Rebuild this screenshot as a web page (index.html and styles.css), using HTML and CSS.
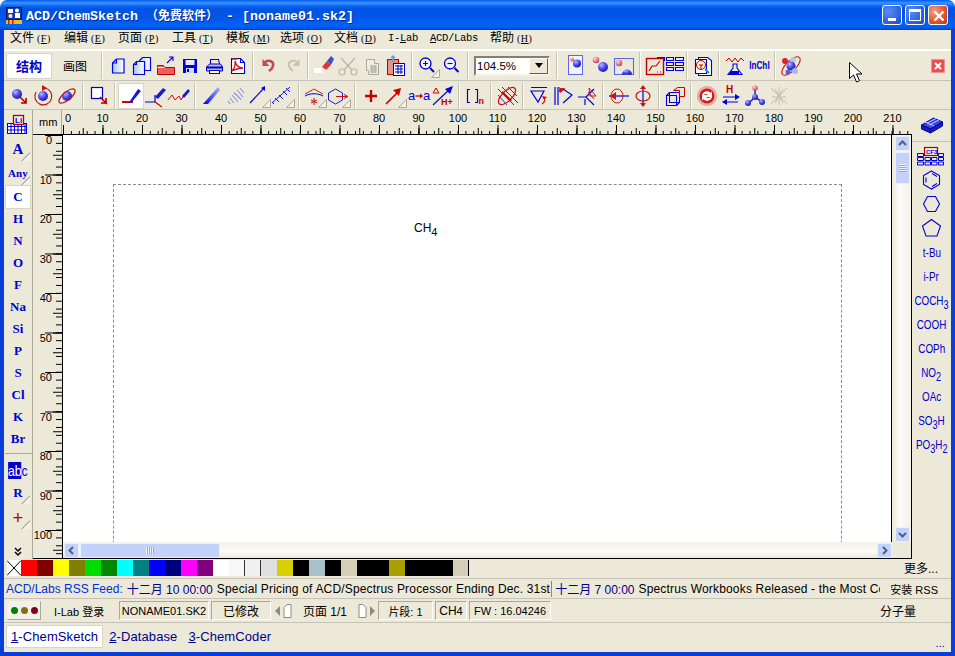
FILE: index.html
```html
<!DOCTYPE html>
<html lang="zh">
<head>
<meta charset="utf-8">
<title>ACD/ChemSketch</title>
<link rel="stylesheet" href="styles.css">
</head>
<body>
<svg class="defs"><defs>
<radialGradient id="bb" cx=".35" cy=".3" r=".8"><stop offset="0" stop-color="#b8b8ff"/><stop offset=".5" stop-color="#4848e8"/><stop offset="1" stop-color="#1010a0"/></radialGradient>
<radialGradient id="pb" cx=".35" cy=".3" r=".8"><stop offset="0" stop-color="#ffd8d8"/><stop offset=".6" stop-color="#e07080"/><stop offset="1" stop-color="#a03040"/></radialGradient>
<radialGradient id="rc" cx=".5" cy=".5" r=".6"><stop offset="0" stop-color="#f4e0d8"/><stop offset=".7" stop-color="#e8b0a8"/><stop offset="1" stop-color="#d08078"/></radialGradient>
<linearGradient id="wedge" x1="0" y1="1" x2="1" y2="0"><stop offset="0" stop-color="#0000e0"/><stop offset="1" stop-color="#a8b8f8"/></linearGradient>
<linearGradient id="pg" x1="0" y1="0" x2="1" y2="0"><stop offset="0" stop-color="#a8c8f0"/><stop offset="1" stop-color="#fff"/></linearGradient>
</defs></svg>
<div class="titlebar">
  <svg class="appicon" viewBox="0 0 16 17"><rect width="16" height="13" fill="#101858"/><rect x="1" y="1" width="14" height="11" fill="#2038a0"/><path d="M2 2h5v4H2zM9 6h5v5H9z" fill="#fff"/><circle cx="11" cy="3.500" r="2" fill="#fff"/><circle cx="4.500" cy="9" r="2" fill="#e8e8ff"/><rect y="13" width="16" height="4" fill="#e8c020"/><path d="M2 17v-4h1.500v4zM6 17v-4h1.500v4z" fill="#d02010"/></svg>
  <span class="title">ACD/ChemSketch <span class="cjk">（免费软件）</span> - [noname01.sk2]</span>
  <div class="wbtns">
    <span class="wbtn"><i class="g-min"></i></span>
    <span class="wbtn"><i class="g-max"></i></span>
    <span class="wbtn close"><svg viewBox="0 0 18 18" width="18" height="18"><path d="M4.500 4.500l9 9M13.500 4.500l-9 9" stroke="#fff" stroke-width="2.400" fill="none"/></svg></span>
  </div>
</div>
<div class="client">
  <nav class="menu">
    <span class="mi">文件<b>(<u>F</u>)</b></span><span class="mi">编辑<b>(<u>E</u>)</b></span><span class="mi">页面<b>(<u>P</u>)</b></span><span class="mi">工具<b>(<u>T</u>)</b></span><span class="mi">模板<b>(<u>M</u>)</b></span><span class="mi">选项<b>(<u>O</u>)</b></span><span class="mi">文档<b>(<u>D</u>)</b></span><span class="mi m1">I-<u>L</u>ab</span><span class="mi m2"><u>A</u>CD/Labs</span><span class="mi">帮助<b>(<u>H</u>)</b></span>
  </nav>

  <div class="tb tb1">
    <span class="modetab on">结构</span><span class="modetab">画图</span>
    <i class="sep"></i>
    <svg class="ic" viewBox="0 0 24 24"><path class="pg" d="M6.500 9l4-4h7.500v14H6.500z"/><path class="bl" d="M6.500 9h4V5"/></svg>
    <svg class="ic" viewBox="0 0 24 24"><path class="pg" d="M9.500 6.500l3-3h8v13h-11z"/><path class="pg" d="M3.500 10.500l3-3h8v13h-11z"/><path class="bl" d="M3.500 10.500h3v-3"/></svg>
    <svg class="ic" viewBox="0 0 24 24"><path d="M3.500 11.500h6l1 2h10v7h-17z" fill="#e86060" stroke="#c00000"/><path d="M3.500 13.500h7" stroke="#fff"/><path class="bl" d="M13 9l6-6M15 3h4v4"/></svg>
    <svg class="ic" viewBox="0 0 24 24"><rect x="5" y="5" width="14" height="14" fill="#0000d8"/><rect x="7.500" y="6" width="9" height="5" fill="#e8e8ff"/><rect x="8" y="14" width="8" height="5" fill="#d0d8f0"/><rect x="9" y="15" width="2" height="3" fill="#0000d8"/></svg>
    <svg class="ic" viewBox="0 0 24 24"><path class="bl" d="M8.500 10V5.500h8l1 4.500"/><path d="M4.500 13l3-3h11l2 3v4h-16z" fill="#b8c0e0" stroke="#0000c0"/><path d="M4.500 13.500h16" stroke="#0000c0" stroke-width="2"/><rect x="7.500" y="16.500" width="10" height="3" fill="#fff" stroke="#0000c0"/></svg>
    <svg class="ic" viewBox="0 0 24 24"><path class="wp" d="M5.500 4.500h9l4 4v11h-13z"/><path class="bl" d="M14.500 4.500v4h4"/><path d="M6 5h5M5.500 17c3-2 4-6 3.500-10 1 4 3 7 8 7-4 0-7 1-11.500 3z" fill="none" stroke="#d81010" stroke-width="1.300"/></svg>
    <i class="sep n"></i>
    <svg class="ic" viewBox="0 0 24 24"><path d="M8 8c5-3 9 0 8 4-.500 3-3 4-4 5" fill="none" stroke="#c84858" stroke-width="2.600"/><path d="M5.500 5v7h7z" fill="#c84858"/></svg>
    <svg class="ic" viewBox="0 0 24 24"><path d="M16 8c-5-3-9 0-8 4 .500 3 3 4 4 5" fill="none" stroke="#c4c4bc" stroke-width="2"/><path d="M18.500 5v7h-7z" fill="#c4c4bc"/></svg>
    <i class="sep n"></i>
    <svg class="ic" viewBox="0 0 24 24"><rect x="2" y="14" width="9" height="5" fill="#fff"/><path d="M10 13l5-6 4 4-5 5z" fill="#d83830"/><path d="M15 7l4-5 3 3-3 6z" fill="#3850d0"/><path d="M10 13l4 3-2 2-3-2z" fill="#f0e8e0"/></svg>
    <svg class="ic" viewBox="0 0 24 24"><path d="M5 4l11 12M19 4L8 16" stroke="#b8b8b0" stroke-width="1.400" fill="none"/><circle cx="6" cy="18" r="3" fill="none" stroke="#b8b8b0" stroke-width="1.200"/><circle cx="18" cy="18" r="3" fill="none" stroke="#b8b8b0" stroke-width="1.200"/></svg>
    <svg class="ic" viewBox="0 0 24 24"><path d="M6.500 5.500h8v4h4v11h-10v-4h-2z" fill="#f0eee4" stroke="#a8a8a0"/><path d="M10 12h7M10 14h7M10 16h7M10 18h7M12 11v8M15 11v8" stroke="#a8a8a0"/></svg>
    <svg class="ic" viewBox="0 0 24 24"><rect x="3.500" y="5.500" width="11" height="15" fill="#e89090" stroke="#c00000"/><rect x="9.500" y="9.500" width="11" height="12" fill="#fff" stroke="#0000c0"/><path d="M11 12h8M11 15h8M11 18h8M14 11v9M17 11v9" stroke="#0000c0"/><path d="M9 1l3 3h-2v4H8V4H6z" fill="#60a0e8"/></svg>
    <i class="sep"></i>
    <svg class="ic" viewBox="0 0 24 24"><circle cx="9.500" cy="9.500" r="5.500" fill="#f0f4ff" stroke="#0000d0" stroke-width="1.300"/><path class="bl" d="M7 9.500h5M9.500 7v5"/><path d="M14 14l4 4" stroke="#0000d0" stroke-width="2"/><path class="tri" d="M23.500 15.500v8h-8z"/></svg>
    <svg class="ic" viewBox="0 0 24 24"><circle cx="10" cy="9.500" r="5.500" fill="#f0f4ff" stroke="#0000d0" stroke-width="1.300"/><path class="bl" d="M7.500 9.500h5"/><path d="M14.500 14l4 4" stroke="#0000d0" stroke-width="2"/></svg>
    <i class="sep"></i>
    <div class="combo"><span class="cval">104.5%</span><span class="cbtn"><i></i></span></div>
    <i class="sep s2"></i>
    <svg class="ic" viewBox="0 0 24 24"><rect x="4.500" y="1.500" width="14" height="19" fill="#f4f2f8" stroke="#5868e8"/><circle cx="8" cy="5.500" r="2" fill="url(#pb)"/><circle cx="13" cy="9.500" r="4" fill="url(#bb)"/></svg>
    <svg class="ic" viewBox="0 0 24 24"><circle cx="8" cy="6" r="3.300" fill="url(#pb)"/><circle cx="15" cy="13" r="5" fill="url(#bb)"/></svg>
    <svg class="ic" viewBox="0 0 24 24"><path class="bl bl3" d="M2.500 20.500V4.500h19v16z"/><circle cx="7" cy="9" r="3.300" fill="url(#pb)"/><path d="M10 20.500a5 5 0 0 1 10 0z" fill="url(#bb)"/></svg>
    <i class="sep"></i>
    <svg class="ic wide" viewBox="0 0 40 24"><path d="M13.500 3.500h7v3h-7zM22.500 3.500h7v3h-7zM31.500 3.500h8v3h-8zM22.500 8.500h7v3h-7zM31.500 8.500h8v3h-8zM22.500 13.500h7v3h-7zM31.500 13.500h8v3h-8z" fill="none" stroke="#0000e0" stroke-width="1.100"/><rect x="2.500" y="4.500" width="17" height="16" fill="#ece9d8" stroke="#c00000" stroke-width="1.400"/><path d="M5 17l3-5h4l4-5M13 18h1M16 18h1" fill="none" stroke="#c00000" stroke-width="1.200"/></svg>
    <i class="sep n"></i>
    <svg class="ic" viewBox="0 0 24 24"><path class="wp" d="M7.500 3.500h9l4 3v15h-13z"/><path class="wp" d="M4.500 5.500h11v14h-11z"/><circle cx="10" cy="11" r="4.500" fill="#f4f0d0" stroke="#c00000"/><path d="M8 11h4M10 11v4" stroke="#c00000"/><path d="M14 15l4 4" stroke="#00a0c0" stroke-width="2"/></svg>
    <i class="sep"></i>
    <svg class="ic" viewBox="0 0 24 24"><path d="M3 7l3-3 3 4 3-4 3 4 3-4 3 3" fill="none" stroke="#c00000"/><path class="bl" d="M10 10h4v4l5 6.500H5l5-6.500z"/><path d="M8 17h8v3H6z" fill="#0000d8"/></svg>
    <span class="inchi">InChI</span>
    <i class="sep"></i>
    <svg class="ic" viewBox="0 0 24 24"><ellipse cx="12" cy="12" rx="12" ry="5" transform="rotate(-45 12 12)" fill="none" stroke="#d01010"/><circle cx="6" cy="7" r="3" fill="#e02030"/><circle cx="14" cy="6" r="3" fill="#b8c8e8"/><circle cx="12" cy="12" r="4.500" fill="url(#bb)"/><circle cx="16" cy="17" r="3" fill="#a8b8e8"/><circle cx="9" cy="18" r="2.500" fill="#5060e0"/></svg>
    <span class="grow"></span>
    <span class="closex"><svg viewBox="0 0 14 14" width="14" height="14"><path d="M4 4l6 6M10 4l-6 6" stroke="#fff" stroke-width="2" fill="none"/></svg></span>
  </div>

  <div class="tb tb2">
    <svg class="ic" viewBox="0 0 24 24"><circle cx="10" cy="10" r="5" fill="url(#bb)"/><path d="M13 13l6 6M19 14v5h-5" stroke="#b00000" stroke-width="1.600" fill="none"/></svg>
    <svg class="ic" viewBox="0 0 24 24"><circle cx="12" cy="12" r="5" fill="url(#bb)"/><path d="M5 8a8.500 8.500 0 1 0 9-4" fill="none" stroke="#d01010" stroke-width="1.200"/><path d="M11 1l5 3-5 3z" fill="#d01010"/></svg>
    <svg class="ic" viewBox="0 0 24 24"><circle cx="12" cy="12" r="5" fill="url(#bb)"/><ellipse cx="12" cy="12" rx="10" ry="4" transform="rotate(-40 12 12)" fill="none" stroke="#c01010" stroke-width="1.200"/></svg>
    <i class="sep"></i>
    <svg class="ic" viewBox="0 0 24 24"><rect x="4.500" y="3.500" width="11" height="11" fill="#fff" stroke="#0000d0" stroke-width="1.200"/><path d="M13 13l7 7M19 14v5h-5" stroke="#b00000" stroke-width="1.600" fill="none"/></svg>
    <i class="sep"></i>
    <span class="sel"><svg class="ic" viewBox="0 0 24 24"><path d="M3 18h11" stroke="#d00000" stroke-width="2"/><path d="M11 17l8-12 3 2-9 11-3 1z" fill="#1818d8"/></svg></span>
    <svg class="ic" viewBox="0 0 24 24"><path d="M2 18h10M12 18V11" stroke="#0000e0" stroke-width="1.200" fill="none"/><path d="M12 18l7 5" stroke="#d00000" stroke-width="1.200"/><path d="M12 13l8-9 3 2-8 9z" fill="#1818d8"/></svg>
    <svg class="ic" viewBox="0 0 24 24"><path d="M1 16l4-5 3 5 4-4 2 4 3-5" stroke="#d01010" fill="none"/><path d="M15 12l6-7 2 2-6 7z" fill="#1818d8"/></svg>
    <i class="sep"></i>
    <svg class="ic" viewBox="0 0 24 24"><path d="M4 20L19 3l2 3-12 14z" fill="url(#wedge)"/></svg>
    <svg class="ic" viewBox="0 0 24 24"><path d="M5 17l2 3M7 14l4 5M9 11l6 7M11 8.500l7 7M14 6l6 7M17 4l4 5" stroke="#8098e8" stroke-width="1.100" fill="none"/></svg>
    <svg class="ic" viewBox="0 0 24 24"><path class="bl" d="M3 19L17 4"/><path d="M18 2v5l-4-3z" fill="#0000e0"/><path class="tri" d="M23.500 15.500v8h-8z"/></svg>
    <svg class="ic" viewBox="0 0 24 24"><path class="thin" d="M1 19L19 3M4 14l4 4M8 11l4 4M12 7l4 4M3 20l-2-2M15 4l4 4"/><path class="tri" d="M23.500 15.500v8h-8z"/></svg>
    <i class="sep"></i>
    <svg class="ic" viewBox="0 0 24 24"><path d="M2 10l9-5 9 5" stroke="#d02020" fill="none"/><path d="M2 12c5-3 13-3 18 0" stroke="#0000d0" fill="none"/><path d="M11 14v7M8 16l6 3M14 16l-6 3" stroke="#d00000"/><path class="tri" d="M23.500 15.500v8h-8z"/></svg>
    <svg class="ic" viewBox="0 0 24 24"><path class="thin" d="M8.500 5l7 4v7l-7 4-7-4V9z"/><path d="M9 12.500h11M17 10.500l4 2-4 2" stroke="#d01010" fill="none"/><path class="tri" d="M23.500 15.500v8h-8z"/></svg>
    <i class="sep"></i>
    <svg class="ic" viewBox="0 0 24 24"><path d="M6 12h12M12 6v12" stroke="#c80000" stroke-width="2.400"/></svg>
    <svg class="ic" viewBox="0 0 24 24"><path d="M3 20L15 8" stroke="#c80000" stroke-width="1.700"/><path d="M18 4l-2 8-6-6z" fill="#c80000"/><path class="tri" d="M23.500 15.500v8h-8z"/></svg>
    <svg class="ic" viewBox="0 0 24 24"><text class="ta" x="1" y="16">a</text><text class="ta" x="16" y="16">a</text><path d="M8.500 12h5" stroke="#d00000" stroke-width="1.300"/><path d="M13 9.500l3 2.500-3 2.500z" fill="#d00000"/></svg>
    <svg class="ic" viewBox="0 0 24 24"><path d="M2 21l18-17" stroke="#0000d0" stroke-width="1.100"/><path d="M22 2l-3 8-5-5z" fill="#0000d8"/><path d="M5 4l3 5H2z" fill="none" stroke="#d00000"/><text class="th" x="10" y="21">H+</text></svg>
    <i class="sep"></i>
    <svg class="ic" viewBox="0 0 24 24"><path d="M7 5.500H4.500v13H7M12 5.500h2.500v13H12" stroke="#0000e0" stroke-width="1.200" fill="none"/><text class="tn" x="15.500" y="20">n</text></svg>
    <i class="sep"></i>
    <svg class="ic" viewBox="0 0 24 24"><path d="M3 5l16 16M7 3l16 16M13 3l9 9M3 11l9 10" stroke="#2030e0" fill="none"/><ellipse cx="12" cy="12" rx="11" ry="5" transform="rotate(-45 12 12)" fill="none" stroke="#d01010" stroke-width="1.200"/><path d="M7 8l9 9" stroke="#c01010" stroke-width="2.400"/></svg>
    <i class="sep"></i>
    <svg class="ic" viewBox="0 0 24 24"><path d="M4 3.500h16M4 7h13l-6 11z" fill="none" stroke="#0000e0" stroke-width="1.200"/><path d="M15 20c3-2 3-5 2-7" stroke="#d01010" fill="none" stroke-width="1.200"/><path d="M15 12l5 1-3 3z" fill="#d01010"/></svg>
    <svg class="ic" viewBox="0 0 24 24"><path d="M4 3v18M7 3v18M12 19l9-8-9-6" stroke="#0000e0" fill="none" stroke-width="1.200"/><path d="M8 8c1-3 3-4 6-3" stroke="#d01010" fill="none" stroke-width="1.200"/><path d="M8 3l1 6 4-3z" fill="#d01010"/></svg>
    <svg class="ic" viewBox="0 0 24 24"><path d="M3 13h8l8 8M11 13l8-8M10 21v-6" stroke="#0000e0" stroke-width="1.200" fill="none"/><path d="M14 4l7 8-6 0zM13 8l6 7" stroke="#d01010" fill="none"/></svg>
    <i class="sep"></i>
    <svg class="ic" viewBox="0 0 24 24"><path d="M2 12h20" stroke="#0000e0" stroke-width="1.200"/><ellipse cx="10" cy="12" rx="6" ry="7" fill="none" stroke="#d01010"/><path d="M3 12l6-4v8z" fill="#d01010"/></svg>
    <svg class="ic" viewBox="0 0 24 24"><path d="M12 4v16" stroke="#3040e8" stroke-width="1.600"/><ellipse cx="12" cy="12" rx="7" ry="5" fill="none" stroke="#d01010" stroke-width="1.200"/><path d="M12 1l3 4H9zM12 23l3-4H9z" fill="#d01010"/></svg>
    <i class="sep"></i>
    <svg class="ic" viewBox="0 0 24 24"><path class="bl" d="M3.500 11.500h10v10h-10zM3.500 11.500l3-3h10v10l-3 3M6.500 8.500v10h10"/><path d="M10.500 6.500l4-3h7v9h-5v-6z" fill="none" stroke="#d00000"/></svg>
    <i class="sep"></i>
    <svg class="ic" viewBox="0 0 24 24"><circle cx="12" cy="12" r="10" fill="url(#rc)"/><circle cx="12" cy="12" r="7.500" fill="#d81818"/><path d="M7 11c1-4 6-5 9-2l1-2v6h-6l2-2c-2-2-4-1-5 1zM17 13c-1 4-6 5-9 2l-1 2v-6h6l-2 2c2 2 4 1 5-1z" fill="#fff"/></svg>
    <svg class="ic" viewBox="0 0 24 24"><text class="th2" x="7" y="9">H</text><path d="M4 13h15M4 18h15" stroke="#0000d8" stroke-width="1.200"/><path d="M21 13l-5-3v6zM3 18l5-3v6z" fill="#0000d8"/></svg>
    <svg class="ic" viewBox="0 0 24 24"><path d="M12 5v8M12 13l-6 6M12 13l7 5" stroke="#2030d0" stroke-width="1.600"/><circle cx="12" cy="4" r="2.800" fill="url(#pb)"/><circle cx="12" cy="13" r="3" fill="url(#bb)"/><circle cx="5" cy="19" r="3" fill="url(#bb)"/><circle cx="19" cy="18" r="3" fill="url(#bb)"/></svg>
    <svg class="ic" viewBox="0 0 24 24"><path d="M4 4l16 16M20 4L4 20M12 3v18M5 13h14M8 5l8 14M16 5L8 19" stroke="#c0beb4" stroke-width="1"/><circle cx="12" cy="12" r="2" fill="#c8c6bc"/></svg>
  </div>

  <div class="work">
    <aside class="lpal">
      <div class="lbtn"><svg class="ic" viewBox="0 0 24 24"><rect x="1.500" y="10.500" width="19" height="10" fill="#fff" stroke="#0000e0"/><path d="M1.500 13.500h19M1.500 17h19M5 10v11M8.500 10v11M12 10v11M15.500 10v11M19 10v11" stroke="#0000e0"/><rect x="7.500" y="2.500" width="10" height="9" fill="#f0eee0" stroke="#b00000" stroke-width="1.300"/><text class="tli" x="9" y="10">Li</text></svg></div>
      <div class="lel tall">A<i class="tri-c"></i></div>
      <div class="lel tall any">Any<i class="tri-c"></i></div>
      <div class="lel sel-c">C</div>
      <div class="lel">H</div>
      <div class="lel">N</div>
      <div class="lel">O</div>
      <div class="lel">F</div>
      <div class="lel">Na</div>
      <div class="lel">Si</div>
      <div class="lel">P</div>
      <div class="lel">S</div>
      <div class="lel">Cl</div>
      <div class="lel">K</div>
      <div class="lel">Br</div>
      <hr class="lsep">
      <div class="labc"><span class="hl">ab</span>c</div>
      <div class="lel">R<i class="tri-c"></i></div>
      <div class="lel plus">+<i class="tri-c"></i></div>
      <span class="grow"></span>
      <svg class="chev" viewBox="0 0 8 10"><path d="M1 1l3 3 3-3M1 5l3 3 3-3" fill="none" stroke="#000" stroke-width="1.500"/></svg>
    </aside>

    <div class="center">
      <div class="rulertop">
        <span class="mm">mm</span>
        <div class="hticks">
          <span class="hn first">0</span><span class="hn">10</span><span class="hn">20</span><span class="hn">30</span><span class="hn">40</span><span class="hn">50</span><span class="hn">60</span><span class="hn">70</span><span class="hn">80</span><span class="hn">90</span><span class="hn">100</span><span class="hn">110</span><span class="hn">120</span><span class="hn">130</span><span class="hn">140</span><span class="hn">150</span><span class="hn">160</span><span class="hn">170</span><span class="hn">180</span><span class="hn">190</span><span class="hn">200</span><span class="hn">210</span>
        </div>
      </div>
      <div class="body">
        <div class="vticks">
          <span class="vn">0</span><span class="vn">10</span><span class="vn">20</span><span class="vn">30</span><span class="vn">40</span><span class="vn">50</span><span class="vn">60</span><span class="vn">70</span><span class="vn">80</span><span class="vn">90</span><span class="vn">100</span>
        </div>
        <div class="viewport">
          <div class="canvas">
            <div class="pagebox"></div>
            <div class="ch4">CH<sub>4</sub></div>
          </div>
          <div class="vscroll">
            <span class="sbtn"><svg viewBox="0 0 15 15" width="15" height="15"><path d="M4 9l3.500-3.500L11 9" stroke="#4d6185" stroke-width="2" fill="none"/></svg></span>
            <span class="vthumb"><i></i></span>
            <span class="grow"></span>
            <span class="sbtn"><svg viewBox="0 0 15 15" width="15" height="15"><path d="M4 6l3.500 3.500L11 6" stroke="#4d6185" stroke-width="2" fill="none"/></svg></span>
          </div>
          <div class="hscroll">
            <span class="sbtn"><svg viewBox="0 0 15 15" width="15" height="15"><path d="M9 4L5.500 7.500 9 11" stroke="#4d6185" stroke-width="2" fill="none"/></svg></span>
            <span class="hthumb"><i></i></span>
            <span class="grow"></span>
            <span class="sbtn"><svg viewBox="0 0 15 15" width="15" height="15"><path d="M6 4l3.500 3.500L6 11" stroke="#4d6185" stroke-width="2" fill="none"/></svg></span>
          </div>
          <div class="corner"></div>
        </div>
      </div>
    </div>

    <aside class="rpal">
      <div class="rtop"><svg class="ic" viewBox="0 0 24 24"><path d="M1.500 12l12-7 9 4-12 7z" fill="#3848e0" stroke="#0000b0"/><path d="M1.500 12v4l9 4v-4zM10.500 16v4l12-7V9z" fill="#1820b0" stroke="#0000b0"/><path d="M7 10l10-5M9 12l10-5M5 9l9 4" stroke="#c8d0ff" fill="none"/></svg></div>
      <div class="ri"><svg class="ic over" viewBox="0 0 24 24"><path d="M-2.500 9.500h6v3h-6zM18.500 9.500h5v3h-5zM-2.500 13.500h6v3h-6zM5 13.500h5.500v3H5zM11.500 13.500h5.500v3h-5.500zM18.500 13.500h5v3h-5zM-2.500 18h6v3h-6zM5 18h5.500v3H5zM11.500 18h5.500v3h-5.500zM18.500 18h5v3h-5z" fill="none" stroke="#0000e0"/><rect x="4.500" y="3.500" width="13" height="8" fill="#f2f0e0" stroke="#b00000" stroke-width="1.200"/><text class="tcf" x="6" y="10">CF3</text></svg></div>
      <div class="ri"><svg class="ic" viewBox="0 0 24 24"><path class="bl" d="M11.500 3l8 4.500v9l-8 4.500-8-4.500v-9zM6 9.500v5M12 5.500l5 3M17 15.500l-5 3"/></svg></div>
      <div class="ri"><svg class="ic" viewBox="0 0 24 24"><path class="bl" d="M7.500 4.500h8l4 7.500-4 7.500h-8l-4-7.500z"/></svg></div>
      <div class="ri"><svg class="ic" viewBox="0 0 24 24"><path class="bl" d="M11.500 3.500l9 6.500-3.500 10h-11l-3.500-10z"/></svg></div>
      <div class="ri"><span class="rt">t-Bu</span></div>
      <div class="ri"><span class="rt">i-Pr</span></div>
      <div class="ri"><span class="rt">COCH<sub>3</sub></span></div>
      <div class="ri"><span class="rt">COOH</span></div>
      <div class="ri"><span class="rt">COPh</span></div>
      <div class="ri"><span class="rt">NO<sub>2</sub></span></div>
      <div class="ri"><span class="rt">OAc</span></div>
      <div class="ri"><span class="rt">SO<sub>3</sub>H</span></div>
      <div class="ri"><span class="rt">PO<sub>3</sub>H<sub>2</sub></span></div>
    </aside>
  </div>

  <div class="palette">
    <svg class="nocolor" viewBox="0 0 14 15"><path d="M0 0l14 15M14 0L0 15" stroke="#000" fill="none"/></svg>
    <i class="sw c1"></i><i class="sw c2"></i><i class="sw c3"></i><i class="sw c4"></i><i class="sw c5"></i><i class="sw c6"></i><i class="sw c7"></i><i class="sw c8"></i><i class="sw c9"></i><i class="sw c10"></i><i class="sw c11"></i><i class="sw c12"></i><i class="sw c13"></i><i class="sw c14"></i><i class="sw c15"></i><i class="sw c16"></i><i class="sw c17"></i><i class="sw c18"></i><i class="sw c19"></i><i class="sw c18"></i><i class="sw c20"></i><i class="sw c18"></i><i class="sw c18"></i><i class="sw c21"></i><i class="sw c18"></i><i class="sw c18"></i><i class="sw c18"></i><i class="sw c20 end"></i>
    <span class="grow"></span>
    <span class="more">更多...</span>
  </div>

  <div class="rss">
    <div class="feed"><span class="fb">ACD/Labs RSS Feed:</span> <span class="fn">十二月 10 00:00</span> <span class="ftxt">Special Pricing of ACD/Spectrus Processor Ending Dec. 31st</span><i class="rule"></i><span class="fn">十二月 7 00:00</span> <span class="ftxt">Spectrus Workbooks Released - the Most Comprehensive</span></div>
    <span class="install">安装 RSS</span>
  </div>

  <div class="status">
    <span class="lights"><i class="l1"></i><i class="l2"></i><i class="l3"></i></span>
    <span class="st ilab">I-Lab 登录</span>
    <span class="st box fname">NONAME01.SK2</span>
    <span class="st box mod">已修改</span>
    <svg class="pgn" viewBox="0 0 17 14"><path d="M5 2v10L0 7z" fill="#8c8c84"/><path d="M9 3.500l3-3h4v13H9z" fill="#fff" stroke="#8c8c84"/></svg>
    <span class="st pg1">页面 1/1</span>
    <svg class="pgn pn2" viewBox="0 0 17 14"><path d="M1 .500h4l3 3v10H1z" fill="#fff" stroke="#8c8c84"/><path d="M12 2v10l5-5z" fill="#8c8c84"/></svg>
    <span class="st box frag">片段: 1</span>
    <span class="st box form">CH<sub>4</sub></span>
    <span class="st box fw">FW : 16.04246</span>
    <span class="grow"></span>
    <span class="st mw">分子量</span>
  </div>

  <div class="tabs">
    <span class="tab on"><u>1</u>-ChemSketch</span>
    <span class="tab"><u>2</u>-Database</span>
    <span class="tab"><u>3</u>-ChemCoder</span>
    <span class="grow"></span>
    <span class="dots">...</span>
  </div>
</div>
<svg class="cursor" viewBox="0 0 13 21"><path d="M.500.500v16l4-3.500 3 7 3-1.300-3-6.700h5.500z" fill="#fff" stroke="#000"/></svg>
</body>
</html>
```
FILE: styles.css
```css
* { box-sizing: border-box; }
html, body { margin: 0; padding: 0; }
body {
  width: 955px; height: 656px; overflow: hidden; position: relative;
  background: #fff; display: flex; flex-direction: column;
  font: 12px "Liberation Sans", "Noto Sans CJK SC", sans-serif; color: #000;
}
i { display: block; font-style: normal; }
.defs { position: absolute; width: 0; height: 0; }
.grow { flex: 1; }

/* title bar */
.titlebar {
  height: 30px; flex: none; display: flex; align-items: center; padding: 0 7px 0 6px;
  border-radius: 7px 7px 0 0;
  background: linear-gradient(#0058ee 0, #3d95ff 3px, #0a66f2 6px, #0053e1 9px, #0057e8 18px, #0062f8 25px, #0058ea 28px, #003fc0 30px);
}
.appicon { width: 16px; height: 17px; flex: none; margin-right: 4px; }
.title {
  font: bold 13.33px "Liberation Mono", "Noto Sans CJK SC", monospace; color: #fff;
  text-shadow: 1px 1px 0 #0a2a90; white-space: nowrap;
}
.title .cjk { font-size: 12px; }
.wbtns { margin-left: auto; display: flex; gap: 3px; }
.wbtn {
  width: 20px; height: 20px; border: 1px solid #fff; border-radius: 3px; display: block; position: relative;
  background: radial-gradient(circle at 30% 30%, #5a8cf0, #2a5ee0 70%, #1c48c0);
}
.wbtn.close { background: radial-gradient(circle at 30% 30%, #f0a080, #e0522c 60%, #c03010); }
.wbtn svg { display: block; margin: .5px; }
.g-min { position: absolute; left: 5px; top: 12px; width: 8px; height: 3px; background: #fff; }
.g-max { position: absolute; left: 3px; top: 3px; width: 12px; height: 12px; border: 1px solid #fff; border-top-width: 3px; }

/* client */
.client {
  flex: 1; min-height: 0; display: flex; flex-direction: column; background: #ece9d8;
  border: 4px solid #0a3ed8; border-top: 0;
}

/* menu */
.menu { height: 19px; flex: none; display: flex; align-items: center; padding: 0 0 3px 6px; font-size: 12px; }
.mi { width: 54px; flex: none; white-space: nowrap; line-height: 16px; }
.mi b { font: normal 10px "Liberation Serif", serif; margin-left: 3px; letter-spacing: .5px; }
.m1, .m2 { font: 10.500px "Liberation Mono", monospace; letter-spacing: -.3px; }
.m1 { width: 42px; }
.m2 { width: 60px; }

/* toolbars */
.tb { display: flex; align-items: center; flex: none; }
.tb1 { height: 32px; border-top: 2px solid #fff; border-bottom: 1px solid #c5c2b8; padding-left: 2px; }
.tb2 { height: 29px; border-bottom: 1px solid #c5c2b8; padding: 1px 0 0 3px; }
.ic { width: 24px; height: 24px; flex: none; display: block; }
.ic.wide { width: 40px; }
.ic.over { overflow: visible; }
.sep { width: 2px; height: 27px; flex: none; margin: 0 3px; border-left: 1px solid #c5c2b8; border-right: 1px solid #fff; }
.sep.n { margin: 0 3px 0 2px; }
.sep.s2 { margin: 0 6px 0 6px; }
.modetab { width: 46px; height: 26px; display: flex; align-items: center; justify-content: center; font-size: 12px; color: #000; flex: none; }
.modetab.on { background: #fff; color: #0000c8; font-weight: bold; font-size: 13px; border: 1px solid #d8d5c8; }
.combo {
  width: 76px; height: 20px; flex: none; display: flex; align-items: center; margin-left: 2px; background: #fff;
  border: 2px solid; border-color: #808078 #f4f2e8 #f4f2e8 #808078;
}
.cval { flex: 1; padding-left: 1px; font-size: 11.500px; }
.cbtn { width: 19px; height: 16px; background: #ece9d8; border: 1px solid; border-color: #fff #606060 #606060 #fff; display: flex; align-items: center; justify-content: center; }
.cbtn i { border: 4px solid transparent; border-top: 5px solid #000; border-bottom: 0; }
.inchi { width: 24px; flex: none; text-align: center; color: #0000d0; font: bold 10px "Liberation Sans", sans-serif; transform: scaleX(.82); white-space: nowrap; }
.closex { width: 14px; height: 14px; margin-right: 6px; background: #e85050; border-radius: 2px; box-shadow: inset 0 0 0 1px #f09090; }
.closex svg { display: block; }
.sel { width: 24px; height: 24px; flex: none; background: #fff; outline: 1px solid #d8d5c8; }

/* svg bits */
.bl { fill: none; stroke: #0000e0; stroke-width: 1.100; }
.bl3 { stroke: #5868e8; }
.thin { fill: none; stroke: #0000e0; stroke-width: .9; }
.pg { fill: url(#pg); stroke: #0000e0; stroke-width: 1.200; }
.wp { fill: #fff; stroke: #0000d0; stroke-width: 1.100; }
.tri { fill: #f4f2e8; stroke: #aca899; }
.ta { font: 13px "Liberation Sans", sans-serif; fill: #0000e0; }
.th { font: bold 9px "Liberation Sans", sans-serif; fill: #c00000; }
.th2 { font: bold 10px "Liberation Sans", sans-serif; fill: #c00000; }
.tn { font: bold 9px "Liberation Sans", sans-serif; fill: #c00000; }
.tli { font: bold 8px "Liberation Sans", sans-serif; fill: #0000d0; }
.tcf { font: bold 6px "Liberation Sans", sans-serif; fill: #0000d0; }

/* work area */
.work { flex: 1; min-height: 0; display: flex; }
.lpal { width: 29px; flex: none; display: flex; flex-direction: column; border-right: 1px solid #aca899; padding-top: 3px; align-items: center; }
.lbtn { height: 24px; flex: none; }
.lel {
  width: 24px; height: 22px; flex: none; position: relative; display: flex; align-items: center; justify-content: center;
  font: bold 13px "Liberation Serif", serif; color: #0000d0;
}
.lel.tall { height: 24px; font-size: 15px; }
.lel.any { font-size: 11px; letter-spacing: .2px; }
.sel-c { background: #fff; outline: 1px solid #d8d5c8; margin-top: 1px; }
.lel.plus { color: #c00000; font-size: 19px; margin-top: 3px; }
.tri-c { position: absolute; right: 0; bottom: 0; width: 9px; height: 9px; background: linear-gradient(135deg, #aca899 0 58%, #f4f2e8 58%); clip-path: polygon(100% 0, 100% 100%, 0 100%); }
.lsep { width: 27px; margin: 3px 0 5px; border: 0; border-top: 1px solid #aca899; flex: none; }
.labc { height: 23px; flex: none; display: flex; align-items: center; font-size: 15px; letter-spacing: -.2px; color: #0000d0; transform: scaleX(.82); }
.hl { background: #0000d0; color: #fff; }
.chev { width: 8px; height: 10px; margin-bottom: 2px; flex: none; }

.center { flex: 1; min-width: 0; display: flex; flex-direction: column; }
.rulertop { height: 24px; flex: none; display: flex; }
.mm { width: 29px; flex: none; font-size: 11px; padding: 6px 0 0 6px; border-right: 1px solid #aca899; }
.hticks {
  flex: 1; display: flex; overflow: hidden; font-size: 11px; padding-top: 2px;
  background-repeat: repeat-x; background-position: 1px bottom;
  background-image: linear-gradient(to right, #000 1px, transparent 1px), linear-gradient(to right, #000 1px, transparent 1px), linear-gradient(to right, #000 1px, transparent 1px);
  background-size: 39.5px 9px, 19.75px 6px, 7.9px 3px;
}
.hn { width: 39.5px; flex: none; text-align: center; white-space: nowrap; }
.hn.first { width: 20.750px; text-align: left; padding-left: 3px; }

.body { flex: 1; min-height: 0; display: flex; border-top: 1px solid #000; border-bottom: 1px solid #000; border-right: 1px solid #000; }
.vticks {
  width: 30px; flex: none; display: flex; flex-direction: column; overflow: hidden; border-right: 1px solid #000; font-size: 11px;
  background-repeat: repeat-y; background-position: right 0;
  background-image: linear-gradient(#000 1px, transparent 1px), linear-gradient(#000 1px, transparent 1px), linear-gradient(#000 1px, transparent 1px);
  background-size: 17px 39.5px, 9px 19.75px, 6px 7.9px;
}
.vn { height: 39.5px; flex: none; text-align: right; padding: 0 10px 0 0; line-height: 11px; }
.viewport { flex: 1; min-width: 0; display: grid; grid-template-columns: 1fr 19px; grid-template-rows: 1fr 16px; }
.canvas { background: #fff; border-right: 1px solid #000; position: relative; overflow: hidden; }
.pagebox { position: absolute; left: 50px; top: 49px; width: 729px; height: 420px; border: 1px dashed #8c8c8c; }
.ch4 { position: absolute; left: 351px; top: 86px; font-size: 12px; line-height: 14px; }
.ch4 sub, .form sub, .ri sub { font-size: .92em; line-height: 0; vertical-align: -4px; }
.vscroll { background: linear-gradient(to right, #ece9d8, #fbfaf6 40%, #f4f2ea); display: flex; flex-direction: column; align-items: center; padding: 1px 0 0 1px; }
.hscroll { background: linear-gradient(#f4f2ea, #fbfaf6 60%, #ece9d8); display: flex; align-items: center; padding: 0 0 0 1px; }
.sbtn { width: 15px; height: 15px; flex: none; background: #c2d2fa; border: 1px solid #e8effe; border-radius: 2px; display: block; }
.sbtn svg { display: block; margin: -1px; }
.vthumb { width: 15px; height: 32px; margin-top: 1px; flex: none; background: #c2d2fa; border: 1px solid #e8effe; border-radius: 2px; display: flex; align-items: center; justify-content: center; }
.vthumb i { width: 7px; height: 8px; background: repeating-linear-gradient(#eef3ff 0 1px, #90a8e0 1px 2px); }
.hthumb { width: 140px; height: 15px; margin-left: 1px; flex: none; background: #c2d2fa; border: 1px solid #e8effe; border-radius: 2px; display: flex; align-items: center; justify-content: center; }
.hthumb i { width: 8px; height: 7px; background: repeating-linear-gradient(to right, #eef3ff 0 1px, #90a8e0 1px 2px); }
.corner { background: #ece9d8; }

.rpal { width: 39px; flex: none; display: flex; flex-direction: column; align-items: center; }
.rtop { height: 32px; width: 100%; padding: 3px 0 0 8px; border-bottom: 1px solid #c5c2b8; flex: none; margin-bottom: 2px; }
.ri {
  height: 24px; width: 36px; flex: none; display: flex; align-items: center; justify-content: center;
  font-size: 13px; color: #0000d0; white-space: pre;
}
.rt { display: block; transform: scaleX(.76); }

/* palette */
.palette { height: 20px; flex: none; display: flex; align-items: center; border-bottom: 1px solid #c5c2b8; padding: 0 13px 2px 3px; }
.nocolor { width: 14px; height: 16px; flex: none; background: #fff; }
.sw { width: 16px; height: 16px; flex: none; }
.sw.end { border-right: 1px solid #000; }
.c1 { background: #f00; } .c2 { background: #800000; } .c3 { background: #ff0; } .c4 { background: #808000; }
.c5 { background: #0d0; } .c6 { background: #080; } .c7 { background: #0ff; } .c8 { background: #008080; }
.c9 { background: #00f; } .c10 { background: #000080; } .c11 { background: #f0f; } .c12 { background: #800080; }
.c13 { background: #fff; }
.c14 { background: #f8f8f8; border-right: 1px solid #333; }
.c15 { background: #f0f0f0; border-right: 1px solid #333; }
.c16 { background: #e0e0e0; }
.c17 { background: #d8cf00; }
.c18 { background: #000; }
.c19 { background: #a8c0c8; }
.c20 { background: #d6cfb8; }
.c21 { background: #a8a000; }
.more { font-size: 12px; }

/* rss */
.rss { height: 20px; flex: none; display: flex; align-items: center; border-bottom: 1px solid #c5c2b8; padding: 0 13px 0 2px; }
.feed { width: 874px; overflow: hidden; white-space: nowrap; font-size: 12px; display: flex; gap: 4px; align-items: center; }
.ftxt { letter-spacing: .17px; }
.fb { color: #0030d8; }
.fn { color: #000090; }
.rule { width: 1px; height: 16px; background: #888; margin: 0 -1px 0 -3px; flex: none; }
.install { margin-left: auto; font-size: 11px; }

/* status */
.status { height: 24px; flex: none; display: flex; align-items: center; border-bottom: 1px solid #c5c2b8; padding: 0 35px 0 3px; font-size: 11px; }
.st { flex: none; white-space: nowrap; }
.box { height: 19px; display: flex; align-items: center; justify-content: center; border: 1px solid; border-color: #aca899 #fff #fff #aca899; }
.lights { width: 34px; height: 19px; display: flex; gap: 3px; align-items: center; justify-content: center; flex: none; border: 1px solid; border-color: #f4f2e8 #aca899 #aca899 #f4f2e8; background: #f4f2e8; }
.lights i { width: 7px; height: 7px; border-radius: 50%; }
.l1 { background: #008000; } .l2 { background: #807020; } .l3 { background: #800020; }
.ilab { width: 78px; padding-left: 13px; }
.fname { width: 90px; }
.mod { width: 60px; margin-left: 2px; font-size: 12px; }
.pgn { width: 17px; height: 14px; flex: none; margin-left: 4px; }
.pg1 { width: 66px; padding-left: 11px; font-size: 12px; }
.pn2 { margin-left: 0; margin-right: 3px; }
.frag { width: 55px; }
.form { width: 32px; margin-left: 2px; font-size: 12px; }
.fw { width: 82px; margin-left: 2px; }
.mw { font-size: 12px; }

/* tabs */
.tabs { height: 29px; flex: none; display: flex; align-items: center; padding: 0 6px 2px 2px; color: #000090; font-size: 13px; letter-spacing: .1px; }
.tab { height: 23px; padding: 0 4px; display: flex; align-items: center; margin-right: 2px; white-space: pre; }
.tab u { text-decoration: underline; }
.tab.on { background: #fff; border: 1px solid #d8d5c8; margin-right: 2px; }
.tab + .tab + .tab { margin-left: 1px; }
.dots { color: #0000c0; font-size: 11px; align-self: flex-end; margin-bottom: 1px; }

/* mouse pointer over the toolbar */
.cursor { position: absolute; left: 849px; top: 62px; width: 13px; height: 21px; }
```
